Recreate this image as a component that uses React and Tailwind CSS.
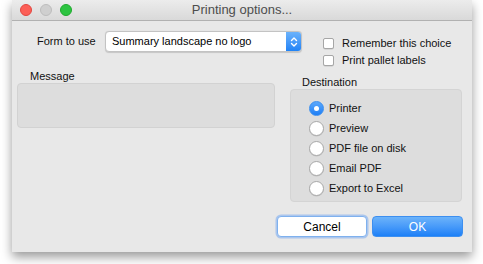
import React from "react";

const font = { fontFamily: '"Liberation Sans", Arial, sans-serif' };

function Checkbox({ label }) {
  return (
    <div className="flex items-center h-[11px] gap-[8px]">
      <div className="w-[11px] h-[11px] rounded-[2px] bg-white border border-[#a6a6a6] shadow-[0_0.5px_0.5px_rgba(0,0,0,0.15)]" />
      <span className="text-[11px] leading-[11px] text-[#111111]">{label}</span>
    </div>
  );
}

function Radio({ label, checked }) {
  return (
    <div className="flex items-center h-[20px] gap-[5px]">
      {checked ? (
        <div className="w-[15px] h-[15px] rounded-full bg-gradient-to-b from-[#5aa8fb] to-[#1c7ef5] border border-[#3a8ef0] flex items-center justify-center">
          <div className="w-[5px] h-[5px] rounded-full bg-white" />
        </div>
      ) : (
        <div className="w-[15px] h-[15px] rounded-full bg-white border border-[#a9a9a9] shadow-[0_0.5px_0.5px_rgba(0,0,0,0.12)]" />
      )}
      <span className="text-[11px] leading-[11px] text-[#111111]">{label}</span>
    </div>
  );
}

export default function App() {
  return (
    <div className="w-[483px] h-[264px] bg-white overflow-hidden" style={font}>
      <div className="ml-[12px] w-[460px] h-[252px] bg-[#e8e8e8] shadow-[0_5px_10px_rgba(0,0,0,0.4)] flex flex-col">
        {/* Title bar */}
        <div className="relative h-[21px] bg-gradient-to-b from-[#ececec] to-[#d9d9d9] border-b border-[#b1b1b1] flex items-center pl-[8px] gap-[8px] shrink-0">
          <div className="w-[12px] h-[12px] rounded-full bg-[#fc5f57] border border-[#e2463f]" />
          <div className="w-[12px] h-[12px] rounded-full bg-[#cfcfcf] border border-[#bdbdbd]" />
          <div className="w-[12px] h-[12px] rounded-full bg-[#2dc441] border border-[#1faa2d]" />
          <div className="absolute inset-0 flex items-center justify-center text-[13px] text-[#4d4d4d]">
            Printing options...
          </div>
        </div>

        {/* Top row */}
        <div className="mt-[10px] h-[39px] flex items-start pl-[25px]">
          <div className="w-[68px] h-[21px] flex items-center text-[11px] text-[#111111]">Form to use</div>
          <div className="w-[197px] h-[21px] flex rounded-[4px] bg-white border border-[#c3c3c3] shadow-[0_0.5px_1px_rgba(0,0,0,0.15)] overflow-hidden">
            <div className="flex-1 flex items-center pl-[6px] text-[11px] text-black">Summary landscape no logo</div>
            <div className="w-[15px] h-full bg-gradient-to-b from-[#6ab2fb] to-[#1f83f6] flex items-center justify-center">
              <svg width="8" height="12" viewBox="0 0 8 12" fill="none" stroke="white" strokeWidth="1.4" strokeLinecap="round" strokeLinejoin="round">
                <path d="M1.5 4.5 L4 2 L6.5 4.5" />
                <path d="M1.5 7.5 L4 10 L6.5 7.5" />
              </svg>
            </div>
          </div>
          <div className="ml-[21px] pt-[7px] flex flex-col gap-[6px]">
            <Checkbox label="Remember this choice" />
            <Checkbox label="Print pallet labels" />
          </div>
        </div>

        {/* Middle row */}
        <div className="flex items-start pl-[5px]">
          <div className="w-[258px] flex flex-col">
            <div className="h-[13px] pl-[13px] text-[11px] leading-[13px] text-[#111111]">Message</div>
            <div className="h-[45px] rounded-[4px] bg-[#dddddd] border border-[#d2d2d2]" />
          </div>
          <div className="ml-[15px] mt-[6px] w-[172px] flex flex-col">
            <div className="h-[13px] pl-[12px] text-[11px] leading-[13px] text-[#111111]">Destination</div>
            <div className="h-[113px] rounded-[4px] bg-[#dddddd] border border-[#d4d4d4] pl-[18px] pt-[8px] flex flex-col">
              <Radio label="Printer" checked />
              <Radio label="Preview" />
              <Radio label="PDF file on disk" />
              <Radio label="Email PDF" />
              <Radio label="Export to Excel" />
            </div>
          </div>
        </div>

        {/* Buttons */}
        <div className="mt-[14px] flex justify-end pr-[9px] gap-[5px]">
          <div className="w-[90px] h-[21px] rounded-[4px] bg-white border border-[#7fb1ee] shadow-[0_0_0_1.5px_rgba(120,170,240,0.55)] flex items-center justify-center text-[12px] text-black">
            Cancel
          </div>
          <div className="w-[91px] h-[21px] rounded-[4px] bg-gradient-to-b from-[#6cb3fa] to-[#1b80f7] border border-[#3d8ff0] flex items-center justify-center text-[12px] text-white">
            OK
          </div>
        </div>
      </div>
    </div>
  );
}
